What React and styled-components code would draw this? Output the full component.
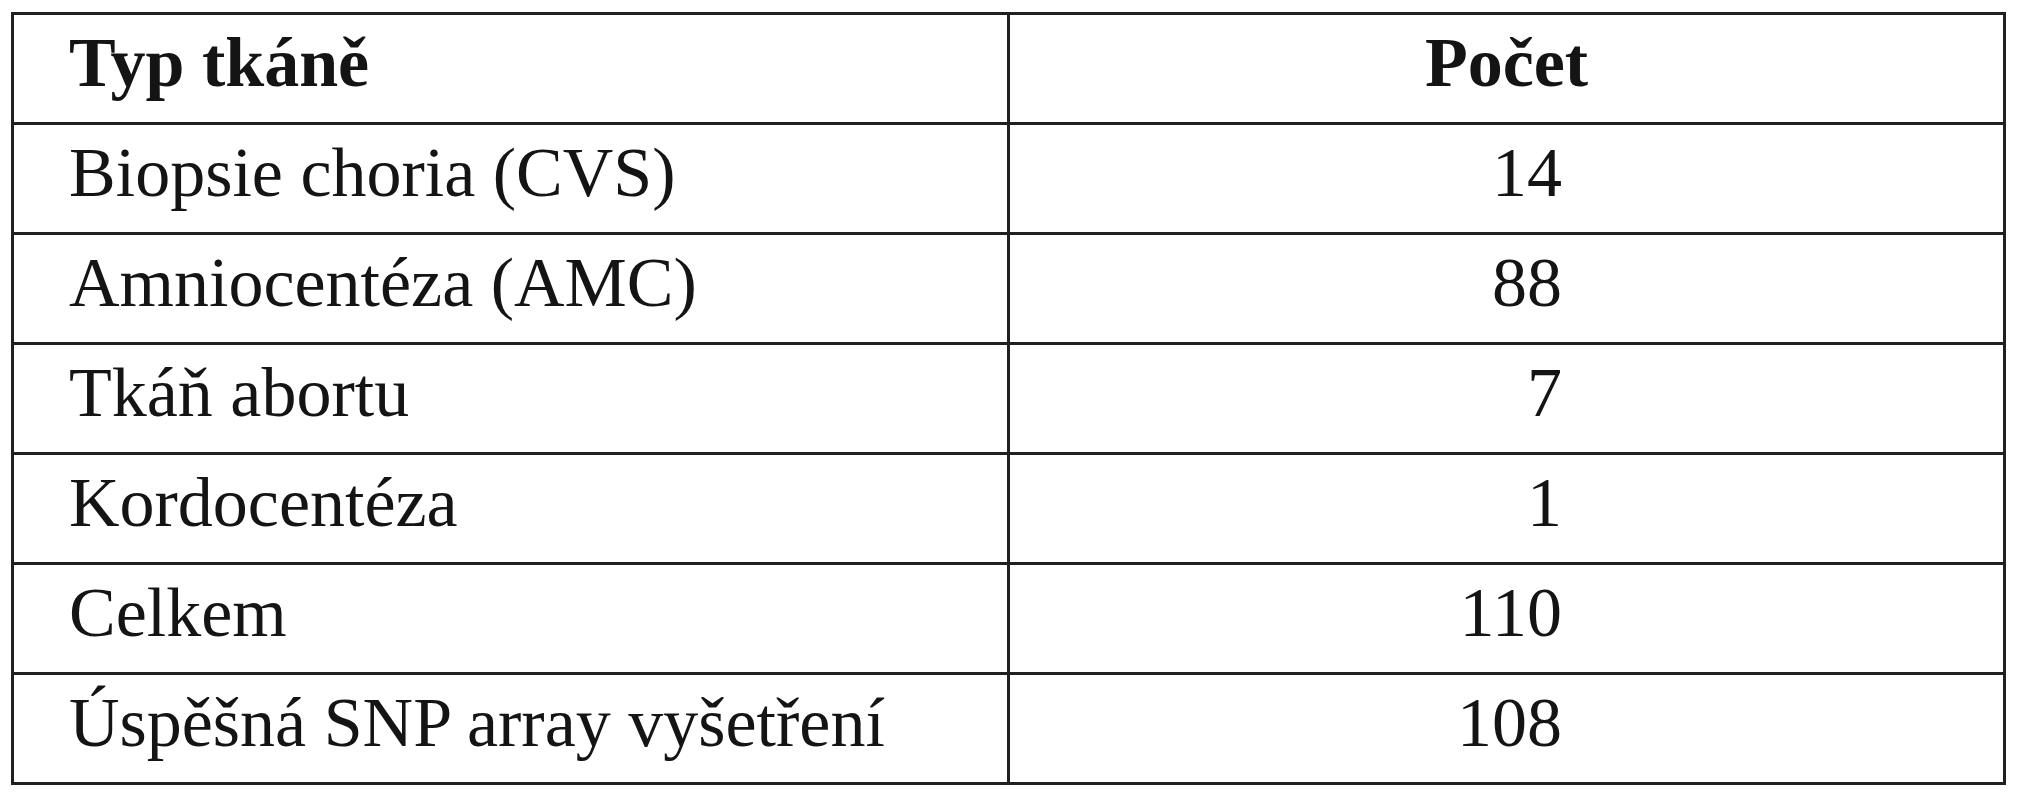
import React from 'react'
import styled, { createGlobalStyle } from 'styled-components'

const GlobalStyle = createGlobalStyle`
  html, body {
    margin: 0;
    padding: 0;
    background: #ffffff;
  }
  body {
    font-family: "Liberation Serif", "Times New Roman", serif;
    color: #141414;
  }
`

const Page = styled.div`
  padding: 12px 0 0 11px;
`

const Table = styled.div`
  display: grid;
  grid-template-columns: 993px 993px;
  grid-auto-rows: 107px;
  gap: 3px;
  padding: 3px;
  width: max-content;
  background: #202020;
`

const Cell = styled.div`
  display: flex;
  align-items: center;
  justify-content: ${(p) => (p.$align === 'right' ? 'flex-end' : p.$align === 'center' ? 'center' : 'flex-start')};
  padding: 0 ${(p) => (p.$align === 'right' ? '441px' : '0')} 12px ${(p) => (p.$align === 'left' ? '55px' : '0')};
  background: #ffffff;
  font-size: 70px;
  font-weight: ${(p) => (p.$head ? 700 : 400)};
  white-space: nowrap;
`

const rows = [
  ['Biopsie choria (CVS)', '14'],
  ['Amniocentéza (AMC)', '88'],
  ['Tkáň abortu', '7'],
  ['Kordocentéza', '1'],
  ['Celkem', '110'],
  ['Úspěšná SNP array vyšetření', '108'],
]

export default function App() {
  return (
    <>
      <GlobalStyle />
      <Page>
        <Table>
          <Cell $head $align="left">Typ tkáně</Cell>
          <Cell $head $align="center">Počet</Cell>
          {rows.map(([name, count]) => (
            <React.Fragment key={name}>
              <Cell $align="left">{name}</Cell>
              <Cell $align="right">{count}</Cell>
            </React.Fragment>
          ))}
        </Table>
      </Page>
    </>
  )
}
